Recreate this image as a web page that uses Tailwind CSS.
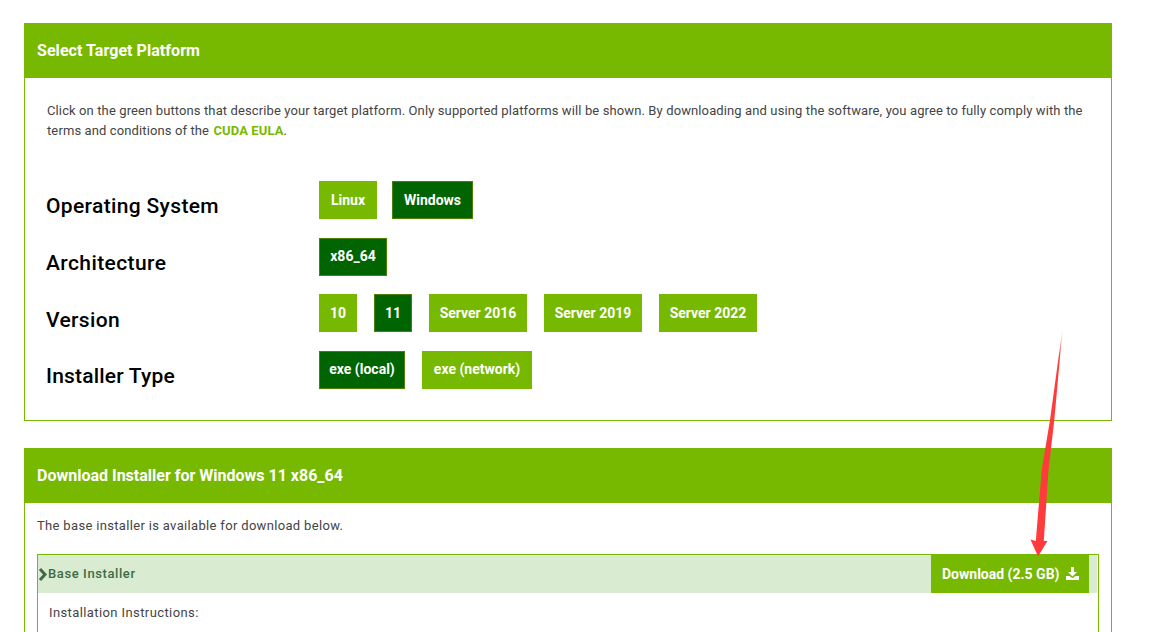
<!DOCTYPE html>
<html>
<head>
<meta charset="utf-8">
<script src="https://cdn.jsdelivr.net/npm/@tailwindcss/browser@4"></script>
</head>
<body class="bg-white">
<div class="relative w-[1150px] h-[632px] overflow-hidden pt-[23px] pl-[24px] font-['Roboto',sans-serif] text-[#444]">
  <section class="w-[1088px] h-[398px] border border-[#76b900]">
    <h2 class="-mx-px -mt-px h-[55px] bg-[#76b900] flex items-center pt-[1px] pl-[13px] text-white text-[16px] tracking-[0.05px] font-bold">Select Target Platform</h2>
    <p class="pl-[22px] pt-[23px] text-[13px] leading-[20px] tracking-[0.115px] w-[1064px]">Click on the green buttons that describe your target platform. Only supported platforms will be shown. By downloading and using the software, you agree to fully comply with the terms and conditions of the <a class="text-[#76b900] font-bold tracking-[0.1px] ml-[1px]">CUDA EULA</a>.</p>
    <div class="mt-[40px] pl-[21px] flex flex-col gap-[18.67px]">
      <div class="flex h-[38px]">
        <div class="w-[273px] pt-[13px] text-[21px] leading-[24px] tracking-[0.35px] font-medium text-black">Operating System</div>
        <div class="flex gap-[15px] text-[14px] font-bold text-white">
          <span class="h-[38px] w-[58px] justify-center flex items-center bg-[#76b900]">Linux</span>
          <span class="h-[38px] w-[81px] justify-center flex items-center bg-[#006400] border border-[#4f7f00]">Windows</span>
        </div>
      </div>
      <div class="flex h-[38px]">
        <div class="w-[273px] pt-[13px] text-[21px] leading-[24px] tracking-[0.4px] font-medium text-black">Architecture</div>
        <div class="flex gap-[15px] text-[14px] font-bold text-white">
          <span class="h-[38px] w-[68px] justify-center flex items-center bg-[#006400] border border-[#4f7f00]">x86_64</span>
        </div>
      </div>
      <div class="flex h-[38px]">
        <div class="w-[273px] pt-[14px] text-[21px] leading-[24px] tracking-[0.35px] font-medium text-black">Version</div>
        <div class="flex gap-[17px] text-[14px] font-bold text-white">
          <span class="h-[38px] w-[38px] justify-center flex items-center bg-[#76b900]">10</span>
          <span class="h-[38px] w-[38px] justify-center flex items-center bg-[#006400] border border-[#4f7f00]">11</span>
          <span class="h-[38px] w-[98px] justify-center flex items-center bg-[#76b900]">Server 2016</span>
          <span class="h-[38px] w-[98px] justify-center flex items-center bg-[#76b900]">Server 2019</span>
          <span class="h-[38px] w-[98px] justify-center flex items-center bg-[#76b900]">Server 2022</span>
        </div>
      </div>
      <div class="flex h-[38px]">
        <div class="w-[273px] pt-[13px] text-[21px] leading-[24px] tracking-[0.2px] font-medium text-black">Installer Type</div>
        <div class="flex gap-[17px] text-[14px] font-bold text-white">
          <span class="h-[38px] w-[86px] justify-center flex items-center bg-[#006400] border border-[#4f7f00]">exe (local)</span>
          <span class="h-[38px] w-[110px] justify-center flex items-center bg-[#76b900]">exe (network)</span>
        </div>
      </div>
    </div>
  </section>
  <section class="mt-[27px] w-[1088px] h-[300px] border border-[#76b900]">
    <h2 class="-mx-px -mt-px h-[55px] bg-[#76b900] flex items-center pt-[1px] pl-[13px] text-white text-[16px] font-bold">Download Installer for Windows 11 x86_64</h2>
    <p class="pl-[12px] pt-[13px] text-[13px] leading-[20px] tracking-[0.33px]">The base installer is available for download below.</p>
    <div class="mt-[18px] ml-[12px] w-[1062px] h-[200px] border border-[#76b900]">
      <div class="h-[38px] flex items-center bg-[#d9ecd1] mr-[1px]">
        <svg class="w-[10px] h-[13px] text-[#3e6b45]" viewBox="0 0 10 13" fill="none" stroke="currentColor" stroke-width="3"><path d="M2 1l5 5.500-5 5.500"/></svg>
        <span class="text-[13px] font-medium tracking-[0.6px] text-[#3e6b45]">Base Installer</span>
        <a class="ml-auto mr-[8px] h-[38px] w-[158px] pl-[11px] flex items-center gap-[7px] bg-[#76b900] text-white text-[14px] font-bold">Download (2.5 GB)
          <svg class="w-[13px] h-[13px] mb-[2px]" viewBox="0 0 13 13" fill="currentColor"><path d="M5 0h3v5h3L6.500 9.500 2 5h3zM0 9h3.500l3 2.300 3-2.300H13v4H0z"/></svg>
        </a>
      </div>
      <p class="pl-[11px] pt-[10px] text-[13px] leading-[20px] tracking-[0.4px]">Installation Instructions:</p>
    </div>
  </section>
  <svg class="absolute left-0 top-0 pointer-events-none" width="1150" height="632" viewBox="0 0 1150 632">
    <defs><linearGradient id="tail" x1="0" y1="327" x2="0" y2="400" gradientUnits="userSpaceOnUse"><stop offset="0" stop-color="#ff3b3b" stop-opacity="0"/><stop offset="0.4" stop-color="#ff3b3b"/></linearGradient></defs>
    <path d="M1062.700 327L1054.300 420L1048.500 470L1043.800 541L1047.500 541L1038 556.500L1030.500 539.500L1035.800 541L1041.700 470L1050 420Z" fill="url(#tail)"/>
  </svg>
</div>
</body>
</html>
